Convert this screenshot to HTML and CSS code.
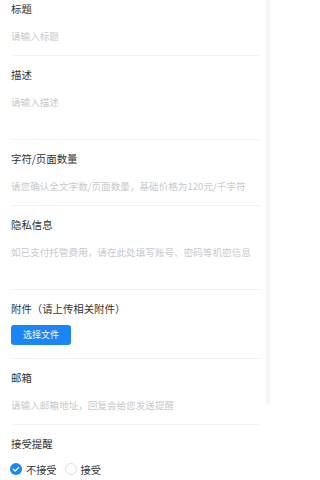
FILE: index.html
```html
<!DOCTYPE html>
<html lang="zh-CN">
<head>
<meta charset="utf-8">
<link rel="stylesheet" href="styles.css">
</head>
<body>
<div class="form">
  <div class="field field-first">
    <div class="label">标题</div>
    <div class="ph">请输入标题</div>
  </div>
  <div class="field">
    <div class="label">描述</div>
    <div class="ph ph-area">请输入描述</div>
  </div>
  <div class="field">
    <div class="label">字符/页面数量</div>
    <div class="ph">请您确认全文字数/页面数量，基础价格为120元/千字符</div>
  </div>
  <div class="field">
    <div class="label">隐私信息</div>
    <div class="ph ph-area">如已支付托管费用，请在此处填写账号、密码等机密信息</div>
  </div>
  <div class="field field-upload">
    <div class="label">附件（请上传相关附件）</div>
    <div class="btn">选择文件</div>
  </div>
  <div class="field">
    <div class="label">邮箱</div>
    <div class="ph">请输入邮箱地址，回复会给您发送提醒</div>
  </div>
  <div class="field field-last">
    <div class="label">接受提醒</div>
    <div class="radios">
      <div class="radio">
        <svg class="ico" viewBox="0 0 12 12"><circle cx="6" cy="6" r="6" fill="#1a86f5"/><path d="M3.3 6.2 L5.2 8 L8.7 4.4" fill="none" stroke="#fff" stroke-width="1.3" stroke-linecap="round" stroke-linejoin="round"/></svg>
        <span>不接受</span>
      </div>
      <div class="radio">
        <svg class="ico" viewBox="0 0 12 12"><circle cx="6" cy="6" r="5.5" fill="#fff" stroke="#d6d7da" stroke-width="0.8"/></svg>
        <span>接受</span>
      </div>
    </div>
  </div>
</div>
<div class="track"></div>
</body>
</html>
```
FILE: styles.css
```css
html, body {
  margin: 0;
  padding: 0;
  background: #fff;
}
body {
  font-family: "Noto Sans CJK SC", "Noto Sans", sans-serif;
  width: 270px;
  height: 480px;
  overflow: hidden;
  position: relative;
}
.form {
  display: flex;
  flex-direction: column;
}
.field {
  margin: 0 10px 0 11px;
  padding: 11px 0 11px;
  border-bottom: 1px solid #f3f3f3;
}
.field-first {
  padding-top: 1px;
}
.label {
  font-size: 10.4px;
  line-height: 16px;
  height: 16px;
  color: #323233;
  white-space: nowrap;
}
.ph {
  margin-top: 11px;
  font-size: 9.6px;
  line-height: 16px;
  height: 16px;
  color: #c8c9cc;
  white-space: nowrap;
}
.ph-area {
  height: 34px;
}
.field-upload {
  padding-bottom: 13px;
}
.btn {
  margin-top: 8px;
  width: 60px;
  height: 20px;
  border-radius: 3px;
  background: #1a86f5;
  color: #fff;
  font-size: 9px;
  line-height: 20px;
  text-align: center;
}
.field-last {
  border-bottom: none;
}
.radios {
  margin-top: 9px;
  display: flex;
  align-items: center;
  gap: 9px;
  height: 16px;
}
.radio {
  display: flex;
  align-items: center;
  gap: 4px;
  font-size: 10.2px;
  color: #323233;
  margin-left: -1px;
}
.ico {
  width: 12px;
  height: 12px;
  display: block;
}
.track {
  position: absolute;
  top: 0;
  right: 0;
  width: 4px;
  height: 404px;
  background: #f6f6f6;
}
```
